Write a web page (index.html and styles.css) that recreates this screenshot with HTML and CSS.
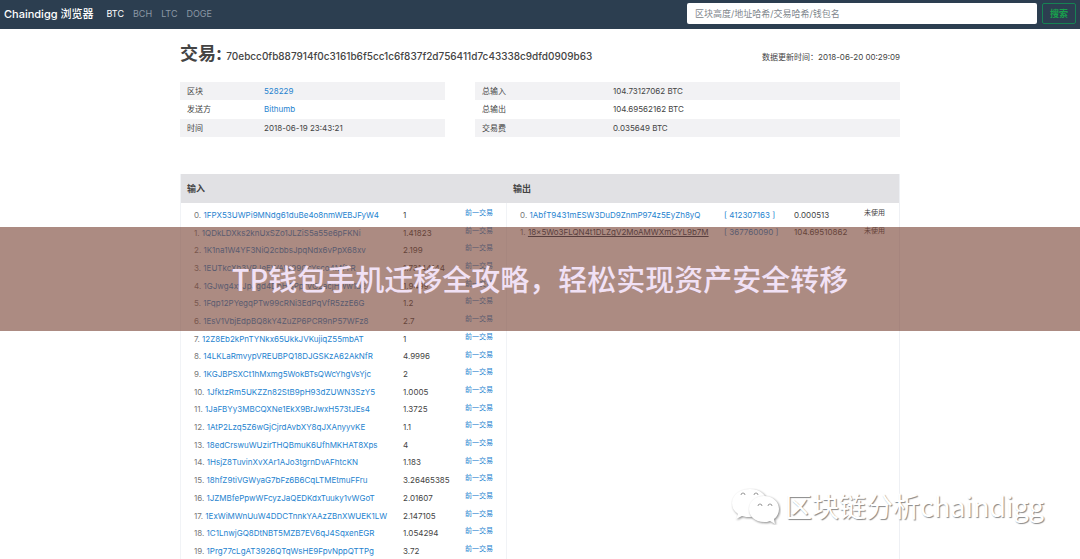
FILE: index.html
```html
<!DOCTYPE html>
<html lang="zh-CN">
<head>
<meta charset="utf-8">
<meta name="viewport" content="width=device-width, initial-scale=1">
<title>Chaindigg 浏览器</title>
<link rel="stylesheet" href="styles.css">
</head>
<body>
<header class="navbar">
  <a class="brand" href="#">Chaindigg 浏览器</a>
  <nav class="coins">
    <a class="coin active" href="#">BTC</a>
    <a class="coin" href="#">BCH</a>
    <a class="coin" href="#">LTC</a>
    <a class="coin" href="#">DOGE</a>
  </nav>
  <form class="search">
    <input class="search-input" type="search" aria-label="搜索" placeholder="区块高度/地址哈希/交易哈希/钱包名">
    <button class="search-button" type="button">搜索</button>
  </form>
</header>

<main class="container">
  <div class="title-row">
    <h1 class="title">交易: <span class="hash">70ebcc0fb887914f0c3161b6f5cc1c6f837f2d756411d7c43338c9dfd0909b63</span></h1>
    <p class="updated">数据更新时间：2018-06-20 00:29:09</p>
  </div>

  <div class="summary">
    <table class="facts facts-block">
      <tr><th scope="row">区块</th><td><a href="#">528229</a></td></tr>
      <tr><th scope="row">发送方</th><td><a href="#">Bithumb</a></td></tr>
      <tr><th scope="row">时间</th><td>2018-06-19 23:43:21</td></tr>
    </table>
    <table class="facts facts-total">
      <tr><th scope="row">总输入</th><td>104.73127062 BTC</td></tr>
      <tr><th scope="row">总输出</th><td>104.69562162 BTC</td></tr>
      <tr><th scope="row">交易费</th><td>0.035649 BTC</td></tr>
    </table>
  </div>

  <div class="card">
    <section class="panel">
      <h2 class="panel-title">输入</h2>
      <table class="entries inputs">
        <tr><td class="addr">0. <a href="#">1FPX53UWPi9MNdg61duBe4o8nmWEBJFyW4</a></td><td class="amount">1</td><td class="note"><a href="#">前一交易</a></td></tr>
        <tr><td class="addr">1. <a href="#">1QDkLDXks2knUxSZo1JLZiS5a55e6pFKNi</a></td><td class="amount">1.41823</td><td class="note"><a href="#">前一交易</a></td></tr>
        <tr><td class="addr">2. <a href="#">1K1na1W4YF3NiQ2cbbsJpqNdx6vPpX68xv</a></td><td class="amount">2.199</td><td class="note"><a href="#">前一交易</a></td></tr>
        <tr><td class="addr">3. <a href="#">1EUTkcXh3VRJeEWAW99GcYsco4MfYR</a></td><td class="amount">1.73144144</td><td class="note"><a href="#">前一交易</a></td></tr>
        <tr><td class="addr">4. <a href="#">1GJwg4xyJpJgd4DpHGPprVG2acjHww1b2</a></td><td class="amount">1.9499</td><td class="note"><a href="#">前一交易</a></td></tr>
        <tr><td class="addr">5. <a href="#">1Fqp12PYegqPTw99cRNi3EdPqVfR5zzE6G</a></td><td class="amount">1.2</td><td class="note"><a href="#">前一交易</a></td></tr>
        <tr><td class="addr">6. <a href="#">1EsV1VbjEdpBQ8kY4ZuZP6PCR9nP57WFz8</a></td><td class="amount">2.7</td><td class="note"><a href="#">前一交易</a></td></tr>
        <tr><td class="addr">7. <a href="#">12Z8Eb2kPnTYNkx65UkkJVKujiqZ55mbAT</a></td><td class="amount">1</td><td class="note"><a href="#">前一交易</a></td></tr>
        <tr><td class="addr">8. <a href="#">14LKLaRmvypVREUBPQ18DJGSKzA62AkNfR</a></td><td class="amount">4.9996</td><td class="note"><a href="#">前一交易</a></td></tr>
        <tr><td class="addr">9. <a href="#">1KGJBPSXCt1hMxmg5WokBTsQWcYhgVsYjc</a></td><td class="amount">2</td><td class="note"><a href="#">前一交易</a></td></tr>
        <tr><td class="addr">10. <a href="#">1JfktzRm5UKZZn82StB9pH93dZUWN3SzY5</a></td><td class="amount">1.0005</td><td class="note"><a href="#">前一交易</a></td></tr>
        <tr><td class="addr">11. <a href="#">1JaFBYy3MBCQXNe1EkX9BrJwxH573tJEs4</a></td><td class="amount">1.3725</td><td class="note"><a href="#">前一交易</a></td></tr>
        <tr><td class="addr">12. <a href="#">1AtP2Lzq5Z6wGjCjrdAvbXY8qJXAnyyvKE</a></td><td class="amount">1.1</td><td class="note"><a href="#">前一交易</a></td></tr>
        <tr><td class="addr">13. <a href="#">18edCrswuWUzirTHQBmuK6UfhMKHAT8Xps</a></td><td class="amount">4</td><td class="note"><a href="#">前一交易</a></td></tr>
        <tr><td class="addr">14. <a href="#">1HsjZ8TuvinXvXAr1AJo3tgrnDvAFhtcKN</a></td><td class="amount">1.183</td><td class="note"><a href="#">前一交易</a></td></tr>
        <tr><td class="addr">15. <a href="#">18hfZ9tiVGWyaG7bFz6B6CqLTMEtmuFFru</a></td><td class="amount">3.26465385</td><td class="note"><a href="#">前一交易</a></td></tr>
        <tr><td class="addr">16. <a href="#">1JZMBfePpwWFcyzJaQEDKdxTuuky1vWGoT</a></td><td class="amount">2.01607</td><td class="note"><a href="#">前一交易</a></td></tr>
        <tr><td class="addr">17. <a href="#">1ExWiMWnUuW4DDCTnnkYAAzZBnXWUEK1LW</a></td><td class="amount">2.147105</td><td class="note"><a href="#">前一交易</a></td></tr>
        <tr><td class="addr">18. <a href="#">1C1LnwjGQ8DtNBT5MZB7EV6qJ4SqxenEGR</a></td><td class="amount">1.054294</td><td class="note"><a href="#">前一交易</a></td></tr>
        <tr><td class="addr">19. <a href="#">1Prg77cLgAT3926QTqWsHE9FpvNppQTTPg</a></td><td class="amount">3.72</td><td class="note"><a href="#">前一交易</a></td></tr>
      </table>
    </section>
    <section class="panel panel-out">
      <h2 class="panel-title">输出</h2>
      <div class="panel-body">
        <table class="entries outputs">
          <tr><td class="addr">0. <a href="#">1AbfT9431mESW3DuD9ZnmP974z5EyZh8yQ</a></td><td class="wallet"><a href="#">[ 412307163 ]</a></td><td class="amount">0.000513</td><td class="note">未使用</td></tr>
          <tr><td class="addr">1. <a class="hovered" href="#">18x5Wo3FLQN4t1DLZgV2MoAMWXmCYL9b7M</a></td><td class="wallet"><a href="#">[ 367760090 ]</a></td><td class="amount">104.69510862</td><td class="note">未使用</td></tr>
        </table>
      </div>
    </section>
  </div>
</main>

<div class="banner">TP钱包手机迁移全攻略，轻松实现资产安全转移</div>

<div class="watermark">
  <svg class="wechat" viewBox="0 0 50 38" aria-hidden="true">
    <path class="bubble" d="M19 2C9 2 1 8 1 16c0 5 2 8 6 11l-2 5 6-3c3 1 5 1 8 1 10 0 17-6 17-14S29 2 19 2z"/>
    <path class="bubble" d="M33 9c-9 0-15 6-15 13s6 13 15 13c2 0 4 0 6-1l5 3-1-5c3-2 5-6 5-10 0-7-6-13-15-13z"/>
    <path class="eye" d="M10 8a2 2 0 0 1 4 0M23 8a2 2 0 0 1 4 0M27 19a2 2 0 0 1 4 0M37 19a2 2 0 0 1 4 0"/>
  </svg>
  <span>区块链分析chaindigg</span>
</div>
</body>
</html>
```
FILE: styles.css
```css
* { box-sizing: border-box; }

body {
  margin: 0;
  position: relative;
  background: #fff;
  color: #444;
  font: 8px/12px Inter, "Noto Sans CJK SC", sans-serif;
}

a { color: #2583cf; text-decoration: none; }

.navbar {
  display: flex;
  align-items: center;
  min-height: 29px;
  padding: 0 4px 2px;
  background: #2c3e50;
}
.brand { color: #fff; font-size: 11px; font-weight: 500; margin-right: 13px; }
.coins { display: flex; gap: 9px; font-size: 9px; }
.coin { color: #8b98a5; }
.coin.active { color: #fff; }
.search { display: flex; gap: 5px; margin-left: auto; width: 389px; }
.search-input {
  flex: 1;
  min-width: 0;
  height: 21px;
  padding: 0 8px;
  border: 0;
  border-radius: 2px;
  background: #fff;
  font: inherit;
  font-size: 9px;
}
.search-input::placeholder { color: #80868c; }
.search-button {
  height: 21px;
  padding: 0 7px;
  border: 1px solid #178254;
  border-radius: 2px;
  background: transparent;
  color: #18a04c;
  font: inherit;
  font-size: 9px;
  font-weight: 700;
}

.container { max-width: 720px; margin: 0 auto; }

.title-row {
  display: flex;
  justify-content: space-between;
  align-items: baseline;
  padding: 12px 0 13px;
}
.title { margin: 0; font-size: 18px; line-height: 26px; font-weight: 700; }
.hash { font-size: 10px; font-weight: 500; }
.updated { margin: 0; }

.summary { display: grid; grid-template-columns: 265fr 425fr; gap: 30px; }
.facts { width: 100%; height: 55px; border-collapse: collapse; table-layout: fixed; }
.facts th, .facts td { padding: 0; text-align: left; font-weight: 400; }
.facts th { padding-left: 7px; }
.facts-block th { width: 84px; }
.facts-total th { width: 138px; }
.facts tr:nth-child(odd) { background: #f2f2f4; }

.card {
  display: grid;
  grid-template-columns: 326fr 394fr;
  margin-top: 37px;
  border-right: 1px solid #eef0f4;
  border-left: 1px solid #f1f3f6;
}
.panel-out { display: flex; flex-direction: column; }
.panel-body { flex: 1; border-left: 1px solid #f1f3f6; }
.panel-title {
  margin: 0;
  padding: 8px 6px;
  background: #e1e1e4;
  font-size: 9px;
  line-height: 13px;
  font-weight: 700;
}
.panel-out .panel-title { padding-left: 7px; }
.entries { width: 100%; border-spacing: 0; table-layout: fixed; padding-top: 3px; }
.entries td { padding: 0; white-space: nowrap; }
.entries .addr { padding-left: 13px; color: #777; }
.entries .note { padding-top: 1px; font-size: 7px; vertical-align: top; }
.inputs { height: 357px; }
.inputs .addr { width: 222px; }
.inputs .amount { width: 62px; }
.outputs { height: 38px; }
.outputs .addr { width: 217px; }
.outputs .wallet { width: 70px; }
.outputs .amount { width: 70px; }
.entries .hovered { color: #22364d; text-decoration: underline; }

.banner {
  position: absolute;
  top: 227px;
  left: 0;
  right: 0;
  padding: 31px 0 33px;
  background: rgba(121, 67, 54, 0.62);
  color: #f1e1f5;
  font-family: "Noto Sans CJK SC", sans-serif;
  font-size: 29px;
  font-weight: 500;
  line-height: 40px;
  text-align: center;
}

.watermark {
  position: absolute;
  top: 486px;
  right: 36px;
  display: flex;
  align-items: center;
  gap: 4px;
  color: #fff;
  font-family: "Noto Sans CJK SC", sans-serif;
  font-size: 27px;
  line-height: 40px;
  text-shadow: 1px 1px 1px #888;
}
.wechat { width: 50px; height: 38px; }
.bubble { fill: #fff; filter: drop-shadow(1px 1px 1px #888); }
.eye { fill: none; stroke: #999; stroke-width: 1; }
```
